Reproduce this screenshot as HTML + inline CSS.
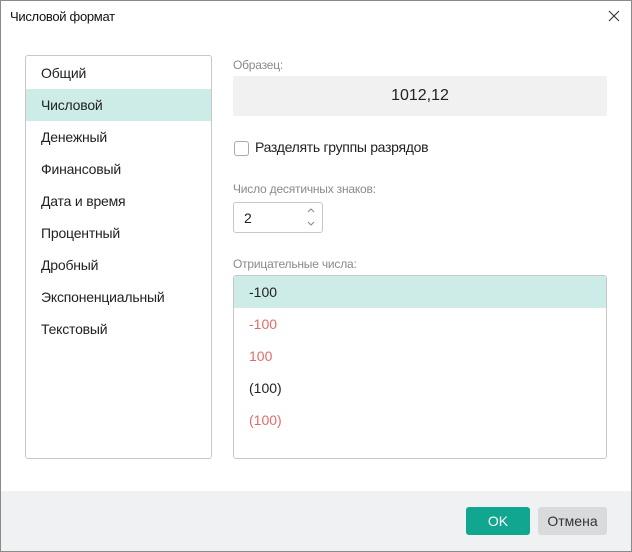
<html><head><style>
body{margin:0;width:632px;height:552px;font-family:"Liberation Sans",sans-serif;background:#fff;position:relative;overflow:hidden}
.win{position:absolute;left:0;top:0;width:630px;height:550px;border:1px solid #8a8a8a;background:#fff}
.a{position:absolute}
.item{position:absolute;left:0;width:185px;height:32px;line-height:32px;padding-left:15px;box-sizing:border-box;font-size:14px;color:#222;letter-spacing:-0.2px}
.lbl{font-size:12px;color:#8a8a8a;letter-spacing:-0.2px}
.neg{position:absolute;left:0;width:372px;height:32px;line-height:32px;padding-left:15px;box-sizing:border-box;font-size:14px}
</style></head><body><div class="win">
<div class="a" style="left:9px;top:8px;font-size:13px;color:#111;letter-spacing:-0.3px">Числовой формат</div>
<svg class="a" style="left:606px;top:8px" width="14" height="14"><path d="M2 2L12 12M12 2L2 12" stroke="#333" stroke-width="1.1"/></svg>
<div class="a" style="left:24px;top:54px;width:185px;height:402px;border:1px solid #c8c8c8;border-radius:3px">
<div class="item" style="top:1px">Общий</div>
<div class="item" style="top:33px;background:#cdece8">Числовой</div>
<div class="item" style="top:65px">Денежный</div>
<div class="item" style="top:97px">Финансовый</div>
<div class="item" style="top:129px">Дата и время</div>
<div class="item" style="top:161px">Процентный</div>
<div class="item" style="top:193px">Дробный</div>
<div class="item" style="top:225px">Экспоненциальный</div>
<div class="item" style="top:257px">Текстовый</div>
</div>
<div class="a lbl" style="left:232px;top:57px">Образец:</div>
<div class="a" style="left:232px;top:75px;width:374px;height:40px;background:#f0f1f0;border-radius:2px;text-align:center;line-height:40px;font-size:16px;color:#222">1012,12</div>
<div class="a" style="left:233px;top:140px;width:13px;height:13px;border:1px solid #aaa;border-radius:3px"></div>
<div class="a" style="left:254px;top:138px;font-size:14px;color:#222;letter-spacing:-0.3px">Разделять группы разрядов</div>
<div class="a lbl" style="left:232px;top:181px">Число десятичных знаков:</div>
<div class="a" style="left:232px;top:201px;width:88px;height:29px;border:1px solid #c8c8c8;border-radius:3px">
<div class="a" style="left:10px;top:7px;font-size:14px;color:#222">2</div>
<svg class="a" style="left:72px;top:4px" width="10" height="20"><path d="M2 5L5 2L8 5M2 15L5 18L8 15" stroke="#888" fill="none" stroke-width="1"/></svg></div>
<div class="a lbl" style="left:232px;top:256px">Отрицательные числа:</div>
<div class="a" style="left:232px;top:274px;width:372px;height:182px;border:1px solid #c8c8c8;border-radius:3px">
<div class="neg" style="top:0px;background:#cdece8;color:#222">-100</div>
<div class="neg" style="top:32px;color:#e36a6a">-100</div>
<div class="neg" style="top:64px;color:#e36a6a">100</div>
<div class="neg" style="top:96px;color:#222">(100)</div>
<div class="neg" style="top:128px;color:#e36a6a">(100)</div>
</div>
<div class="a" style="left:0;top:490px;width:630px;height:60px;background:#f0f1f2"></div>
<div class="a" style="left:465px;top:506px;width:64px;height:28px;background:#10a690;border-radius:3px;color:#fff;text-align:center;line-height:28px;font-size:14px">OK</div>
<div class="a" style="left:537px;top:506px;width:69px;height:28px;background:#d9dadb;border-radius:3px;color:#333;text-align:center;line-height:28px;font-size:14px">Отмена</div>
</div></body></html>
